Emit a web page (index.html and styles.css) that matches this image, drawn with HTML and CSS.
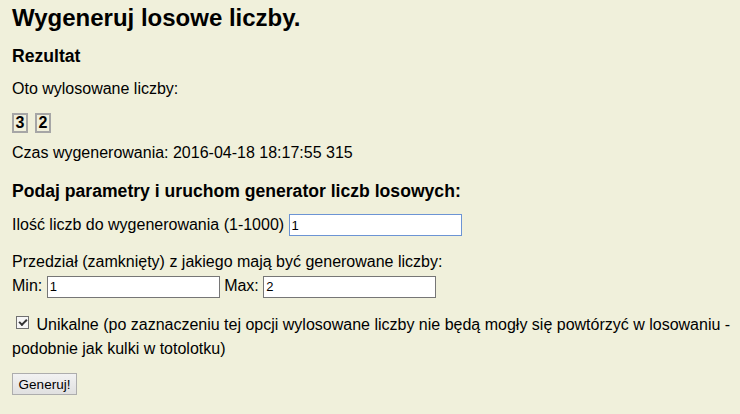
FILE: index.html
```html
<!DOCTYPE html>
<html lang="pl">
<head>
    <meta charset="UTF-8">
    <meta name="viewport" content="width=device-width, initial-scale=1.0">
    <title>Generator liczb losowych</title>
    <link rel="stylesheet" href="styles.css">
</head>
<body>
    <div class="page">
        <h1>Wygeneruj losowe liczby.</h1>

        <h3 class="section-title">Rezultat</h3>
        <p class="line">Oto wylosowane liczby:</p>
        <div class="numbers">
            <span class="number">3</span>
            <span class="number">2</span>
        </div>
        <p class="line time">Czas wygenerowania: 2016-04-18 18:17:55 315</p>

        <h3 class="section-title params-title">Podaj parametry i uruchom generator liczb losowych:</h3>
        <form class="generator-form">
            <p class="field count-field">
                <label for="count">Ilość liczb do wygenerowania (1-1000)</label>
                <input type="text" id="count" name="count" class="text-input active" value="1">
            </p>
            <p class="field range-field">
                Przedział (zamknięty) z jakiego mają być generowane liczby:<br>
                <label for="min">Min:</label>
                <input type="text" id="min" name="min" class="text-input" value="1">
                <label for="max">Max:</label>
                <input type="text" id="max" name="max" class="text-input" value="2">
            </p>
            <p class="unique-field">
                <input type="checkbox" id="unique" name="unique" class="checkbox" checked>
                <label for="unique">Unikalne (po zaznaczeniu tej opcji wylosowane liczby nie będą mogły się powtórzyć w losowaniu - podobnie jak kulki w totolotku)</label>
            </p>
            <button type="submit" class="submit-button">Generuj!</button>
        </form>
    </div>
</body>
</html>
```

FILE: styles.css
```css
body {
    margin: 0;
    background-color: #f0f0db;
    color: #000;
    font-family: "Liberation Sans", Arial, sans-serif;
    font-size: 16px;
}

.page {
    padding: 0 4px 0 12px;
}

h1 {
    font-size: 24px;
    line-height: 28px;
    margin: 4px 0 0;
}

.section-title {
    font-size: 17.6px;
    line-height: 22px;
    margin: 13px 0 0;
}

.params-title {
    margin-top: 17px;
}

.line {
    line-height: 20px;
    margin: 12px 0 0;
}

.numbers {
    display: flex;
    gap: 7px;
    margin-top: 14px;
}

.number {
    display: inline-block;
    width: 16px;
    height: 20px;
    box-sizing: border-box;
    border: 2px solid #a6a6a6;
    font-weight: bold;
    font-size: 16px;
    line-height: 16px;
    text-align: center;
}

.time {
    margin-top: 10px;
}

.field {
    line-height: 20px;
    margin: 12px 0 0;
}

.range-field {
    line-height: 24px;
    margin-top: 14px;
}

.text-input {
    width: 173px;
    height: 22px;
    box-sizing: border-box;
    margin: 0;
    padding: 0 2px;
    border: 1px solid #767676;
    background: #fff;
    font-family: "Liberation Sans", Arial, sans-serif;
    font-size: 13px;
    color: #000;
    outline: none;
}

.text-input.active {
    border-color: #6c94d4;
}

.unique-field {
    line-height: 24px;
    margin: 15px 0 0;
}

/* plain grey box with a dark tick, like the old system checkbox */
.checkbox {
    appearance: none;
    -webkit-appearance: none;
    position: relative;
    width: 13px;
    height: 13px;
    box-sizing: border-box;
    margin: 0 3px 0 4px;
    border: 1px solid #707070;
    background: #f6f6f6;
    vertical-align: 1px;
}

.checkbox:checked::after {
    content: "";
    position: absolute;
    left: 2px;
    top: 1px;
    width: 6px;
    height: 3px;
    border-left: 2px solid #333;
    border-bottom: 2px solid #333;
    transform: rotate(-45deg);
    transform-origin: 50% 50%;
    top: 2px;
}

.submit-button {
    margin-top: 12px;
    width: 65px;
    height: 22px;
    padding: 0;
    border: 1px solid #adadad;
    border-radius: 0;
    background: linear-gradient(#f2f2f2, #e0e0e0);
    font-family: "Liberation Sans", Arial, sans-serif;
    font-size: 13.5px;
    color: #000;
}
```
